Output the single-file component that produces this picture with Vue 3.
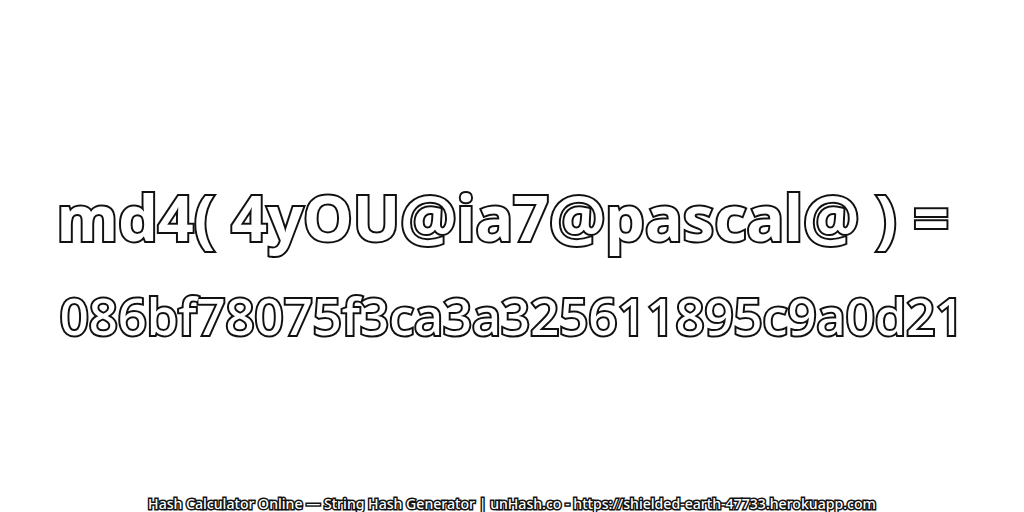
<script setup>
const line1 = 'md4( 4yOU@ia7@pascal@ ) ='
const line2 = '086bf78075f3ca3a325611895c9a0d21'
const footer = 'Hash Calculator Online — String Hash Generator | unHash.co - https://shielded-earth-47733.herokuapp.com'
</script>

<template>
  <main class="page">
    <section class="hash">
      <h1 class="line first">{{ line1 }}</h1>
      <h2 class="line second">{{ line2 }}</h2>
    </section>
    <footer class="foot">{{ footer }}</footer>
  </main>
</template>

<style>
html, body { margin: 0; background: #fff; }
</style>

<style scoped>
.page {
  width: 1024px;
  height: 512px;
  display: flex;
  flex-direction: column;
  align-items: center;
  overflow: hidden;
  background: #fff;
  font-family: "Noto Sans", "Open Sans", sans-serif;
}
.hash {
  padding-top: 177px;
  display: flex;
  flex-direction: column;
  align-items: center;
  gap: 19px;
  flex: 1;
}
.line {
  margin: 0;
  white-space: nowrap;
  color: #fff;
  -webkit-text-stroke: 4px #111;
  paint-order: stroke fill;
  line-height: 80px;
}
.first {
  font-weight: 700;
  font-size: 62.8px;
  margin-right: 18px;
}
.second {
  font-weight: 500;
  font-size: 50.8px;
}
.foot {
  font-size: 14.1px;
  font-weight: 500;
  line-height: 16px;
  height: 16px;
  white-space: nowrap;
  color: #fff;
  -webkit-text-stroke: 3px #111;
  paint-order: stroke fill;
}
</style>
